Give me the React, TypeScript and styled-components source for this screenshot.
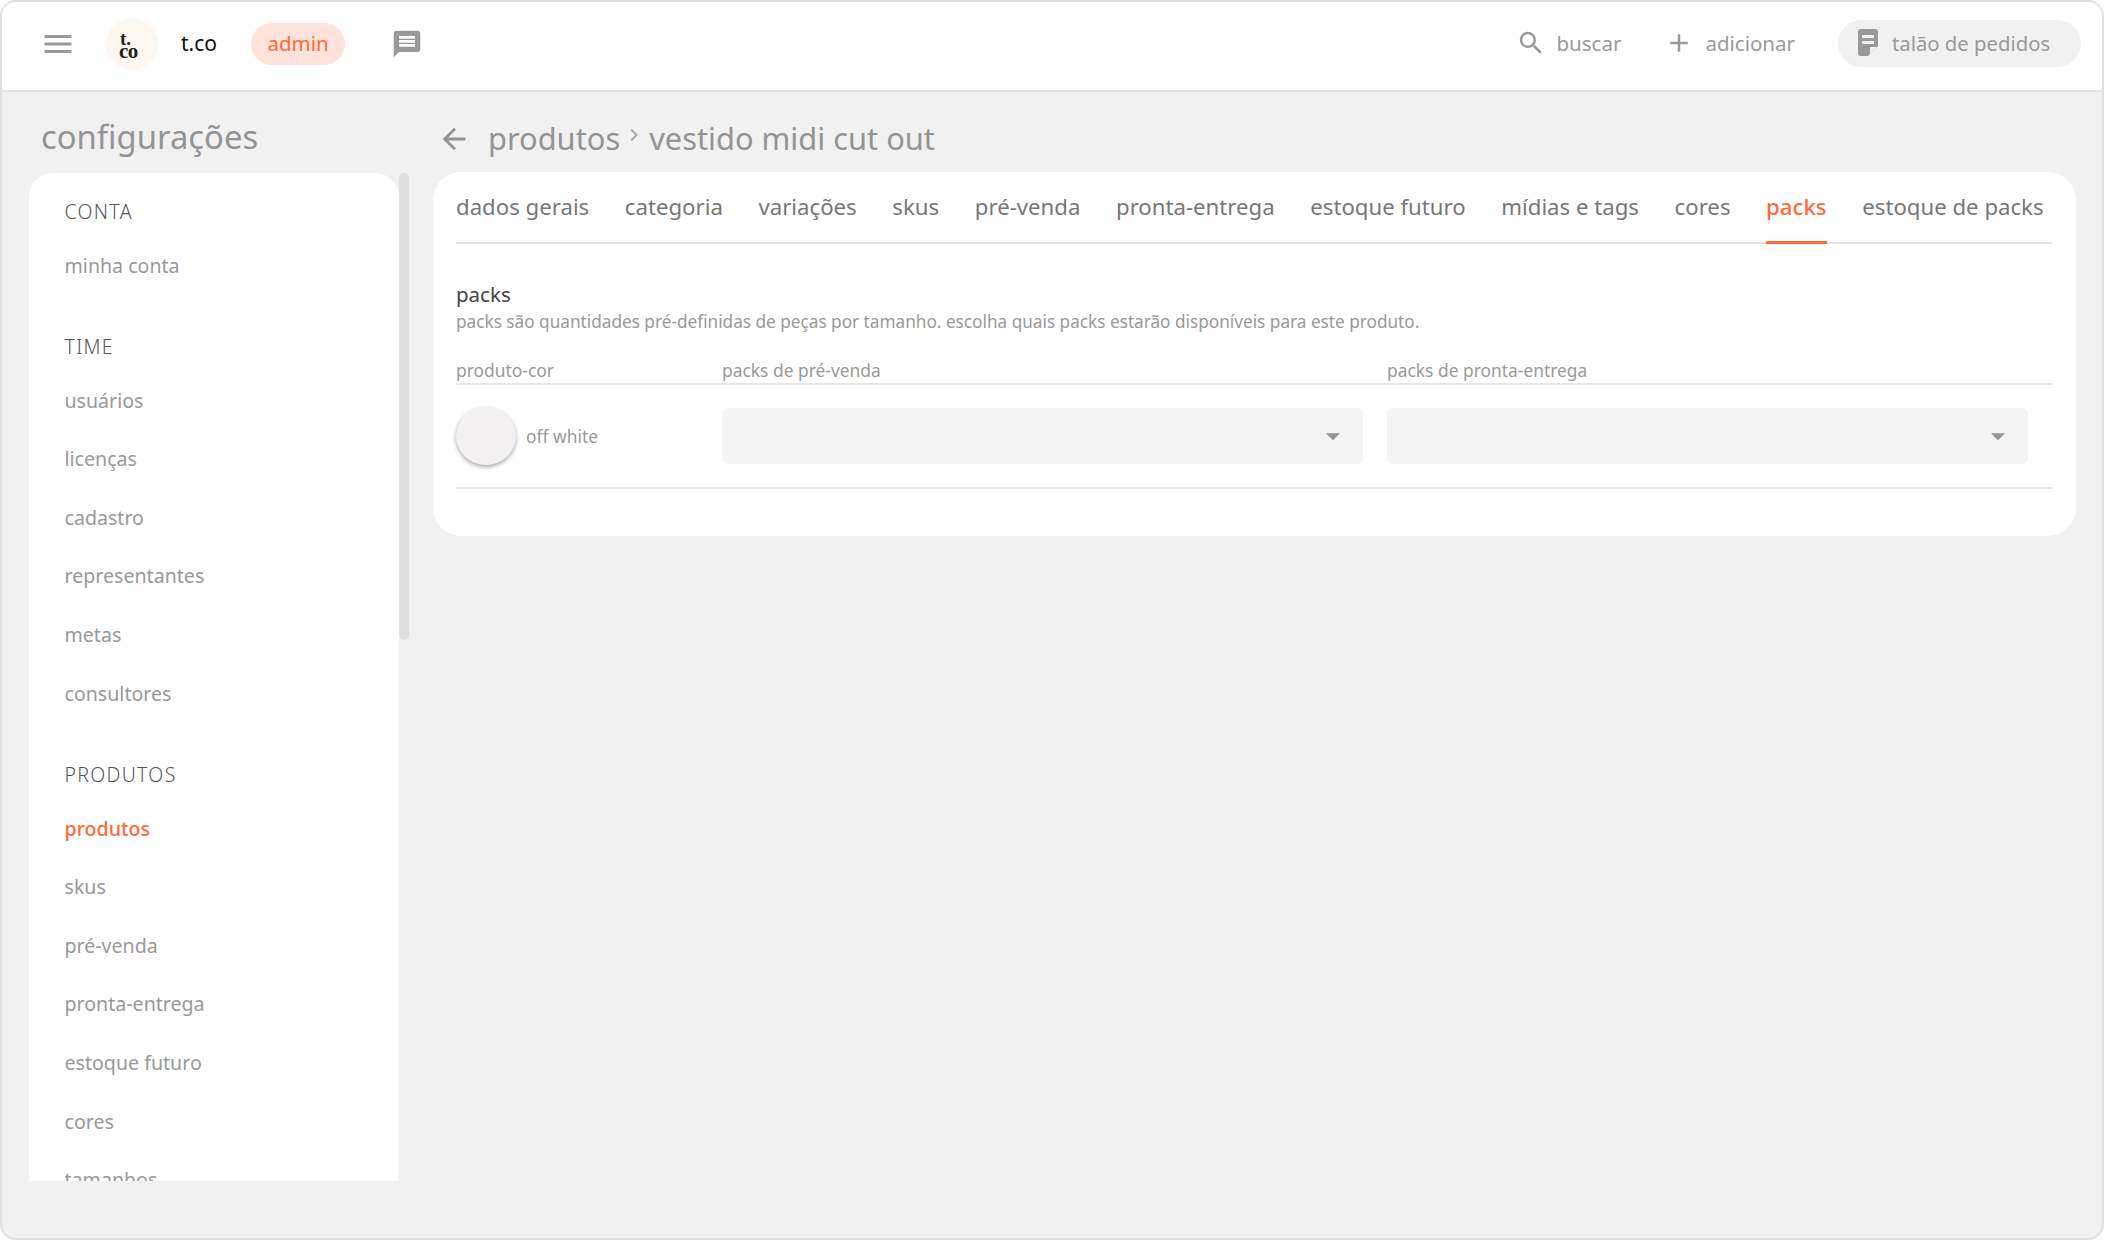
import React from "react";
import styled, { createGlobalStyle } from "styled-components";
import { MdMenu, MdMessage, MdSearch, MdAdd, MdArrowBack, MdArrowDropDown, MdChevronRight } from "react-icons/md";

const Global = createGlobalStyle`
  html, body { margin: 0; padding: 0; background: #fff; }
  * { box-sizing: border-box; }
`;
const Frame = styled.div`
  width: 2104px; height: 1240px; background: #f1f1f1; border: 2px solid #e0e0e0;
  border-radius: 16px; overflow: hidden; display: flex; flex-direction: column;
  font-family: "Noto Sans", sans-serif;
`;
const Header = styled.header`
  height: 90px; flex: none; background: #fff; border-bottom: 2px solid #e4e4e4;
  display: flex; align-items: center; padding: 0 21px 5px 38px; color: #999;
`;
const MenuIcon = styled(MdMenu)` font-size: 36px; color: #999; `;
const Logo = styled.div`
  width: 52px; height: 52px; border-radius: 50%; background: #fff8f2; margin-left: 30px;
  display: flex; flex-direction: column; align-items: flex-start; justify-content: center; padding: 2px 0 0 13px;
  font-family: "Liberation Serif", serif; font-weight: 700; color: #222; line-height: 12px;
`;
const LogoTop = styled.span` font-size: 19px; margin-left: 1px; `;
const LogoBottom = styled.span` font-size: 21px; letter-spacing: -0.5px; `;
const Brand = styled.span`
  margin: 0 0 2px 23px; color: #111; font-size: 21px; font-family: "Noto Sans", sans-serif;
`;
const Role = styled.span`
  margin-left: 34px; width: 94px; height: 42px; padding-bottom: 2px; border-radius: 21px; background: #ffe2da; color: #ff6a3a;
  display: flex; align-items: center; justify-content: center; font-size: 20.5px;
`;
const ChatIcon = styled(MdMessage)` margin-left: 46px; font-size: 32px; color: #999; `;
const Spacer = styled.div` flex: 1; `;
const Action = styled.div`
  display: flex; align-items: center; gap: 11px; font-size: 20.5px; color: #999; margin: 0 43px 2px 0;
  svg { font-size: 30px; }
`;
const Pill = styled.div`
  width: 243px; height: 47px; padding: 0 0 2px 20px; border-radius: 24px; background: #f1f1f1; display: flex; align-items: center;
  gap: 14px; font-size: 20.3px; color: #999;
`;
const Body = styled.div` flex: 1; display: flex; min-height: 0; `;
const Side = styled.aside` width: 431px; flex: none; padding-left: 27px; display: flex; flex-direction: column; `;
const SideTitle = styled.h1`
  margin: 0; height: 81px; padding: 20px 0 0 12px; font-size: 32.8px; font-weight: 400; line-height: 50px; color: #949494;
  font-family: "Noto Sans", sans-serif;
`;
const SideRow = styled.div` display: flex; align-items: flex-start; `;
const SideCard = styled.nav`
  width: 370px; height: 1008px; background: #fff; border-radius: 24px 24px 0 0; overflow: hidden; padding: 19px 0 0 35.5px;
`;
const Scroll = styled.div` width: 10px; height: 467px; border-radius: 5px; background: #dfdfdf; `;
const Section = styled.section` margin-bottom: 32px; `;
const SectionTitle = styled.div`
  height: 39px; line-height: 39px; font-size: 19.5px; letter-spacing: 1.3px; color: #555; font-weight: 300; margin-bottom: 5.5px;
`;
const Item = styled.div<{ $active?: boolean }>`
  height: 58.6px; line-height: 58.6px; font-size: 19.6px; color: ${(p) => (p.$active ? "#ff6a3a" : "#999")};
  font-weight: ${(p) => (p.$active ? 500 : 400)};
`;
const Main = styled.main` flex: 1; min-width: 0; padding-right: 26px; `;
const Crumbs = styled.div`
  height: 80px; display: flex; align-items: center; padding: 12px 0 0 4px; color: #949494; font-size: 30.8px;
`;
const BackIcon = styled(MdArrowBack)` font-size: 34px; margin-right: 17px; margin-top: 2px; color: #949494; flex: none; `;
const Chevron = styled(MdChevronRight)` font-size: 24px; margin: -6px 3px 0 2px; color: #aaa; flex: none; `;
const Card = styled.div`
  width: 1643px; height: 364px; background: #fff; border-radius: 28px; padding: 0 24px 0 23px;
`;
const Tabs = styled.div`
  height: 72px; border-bottom: 2px solid #e6e6e6; display: flex; gap: 35.6px;
`;
const Tab = styled.div<{ $active?: boolean }>`
  height: 72px; padding-top: 19px; font-size: 22.2px; line-height: 32px; color: ${(p) => (p.$active ? "#ff6a3a" : "#777")};
  font-weight: ${(p) => (p.$active ? 500 : 400)};
  border-bottom: 3px solid ${(p) => (p.$active ? "#ff6a3a" : "transparent")};
`;
const PackTitle = styled.div` margin-top: 36px; font-size: 20.5px; line-height: 28px; color: #444; `;
const PackDesc = styled.div` margin-top: 1px; font-size: 17.2px; line-height: 26px; color: #999; `;
const TableHead = styled.div`
  display: grid; grid-template-columns: 266px 665px 1fr; margin-top: 16px; height: 34px; padding-top: 6px; border-bottom: 2px solid #e6e6e6;
  font-size: 17.4px; line-height: 26px; color: #999;
`;
const TableRow = styled.div`
  display: grid; grid-template-columns: 266px 641px 665px; height: 104px; align-items: center;
  border-bottom: 2px solid #e6e6e6;
`;
const ColorCell = styled.div` display: flex; align-items: center; gap: 10px; font-size: 17.4px; color: #999; `;
const Swatch = styled.div`
  width: 60px; height: 58px; border-radius: 50%; background: #f3f1f1; box-shadow: 0 2px 4px rgba(0,0,0,.35);
`;
const Select = styled.div<{ $gap?: boolean }>`
  height: 56px; border-radius: 6px; background: #f4f4f4; display: flex; align-items: center; justify-content: flex-end;
  padding-right: 13px; color: #949494; font-size: 34px; margin-left: ${(p) => (p.$gap ? "24px" : "0")};
`;
const NoteIcon = () => (
  <svg width="20" height="27" viewBox="0 0 20 27">
    <path fill="#999" d="M3 0h14a3 3 0 0 1 3 3v14L10 27H3a3 3 0 0 1-3-3V3a3 3 0 0 1 3-3z" />
    <path fill="#f1f1f1" d="M4 6h12v3H4zM4 12h12v3H4zM12 25l7-7h-7z" />
  </svg>
);

const groups: [string, string[]][] = [
  ["CONTA", ["minha conta"]],
  ["TIME", ["usuários", "licenças", "cadastro", "representantes", "metas", "consultores"]],
  ["PRODUTOS", ["produtos", "skus", "pré-venda", "pronta-entrega", "estoque futuro", "cores", "tamanhos"]],
];
const tabs = ["dados gerais", "categoria", "variações", "skus", "pré-venda", "pronta-entrega", "estoque futuro", "mídias e tags", "cores", "packs", "estoque de packs"];

export default function App() {
  return (
    <Frame>
      <Global />
      <Header>
        <MenuIcon />
        <Logo><LogoTop>t.</LogoTop><LogoBottom>co</LogoBottom></Logo>
        <Brand>t.co</Brand>
        <Role>admin</Role>
        <ChatIcon />
        <Spacer />
        <Action><MdSearch />buscar</Action>
        <Action><MdAdd />adicionar</Action>
        <Pill><NoteIcon />talão de pedidos</Pill>
      </Header>
      <Body>
        <Side>
          <SideTitle>configurações</SideTitle>
          <SideRow>
            <SideCard>
              {groups.map(([title, items]) => (
                <Section key={title}>
                  <SectionTitle>{title}</SectionTitle>
                  {items.map((i) => <Item key={i} $active={i === "produtos"}>{i}</Item>)}
                </Section>
              ))}
            </SideCard>
            <Scroll />
          </SideRow>
        </Side>
        <Main>
          <Crumbs><BackIcon />produtos<Chevron />vestido midi cut out</Crumbs>
          <Card>
            <Tabs>{tabs.map((t) => <Tab key={t} $active={t === "packs"}>{t}</Tab>)}</Tabs>
            <PackTitle>packs</PackTitle>
            <PackDesc>packs são quantidades pré-definidas de peças por tamanho. escolha quais packs estarão disponíveis para este produto.</PackDesc>
            <TableHead><span>produto-cor</span><span>packs de pré-venda</span><span>packs de pronta-entrega</span></TableHead>
            <TableRow>
              <ColorCell><Swatch />off white</ColorCell>
              <Select><MdArrowDropDown /></Select>
              <Select $gap><MdArrowDropDown /></Select>
            </TableRow>
          </Card>
        </Main>
      </Body>
    </Frame>
  );
}
